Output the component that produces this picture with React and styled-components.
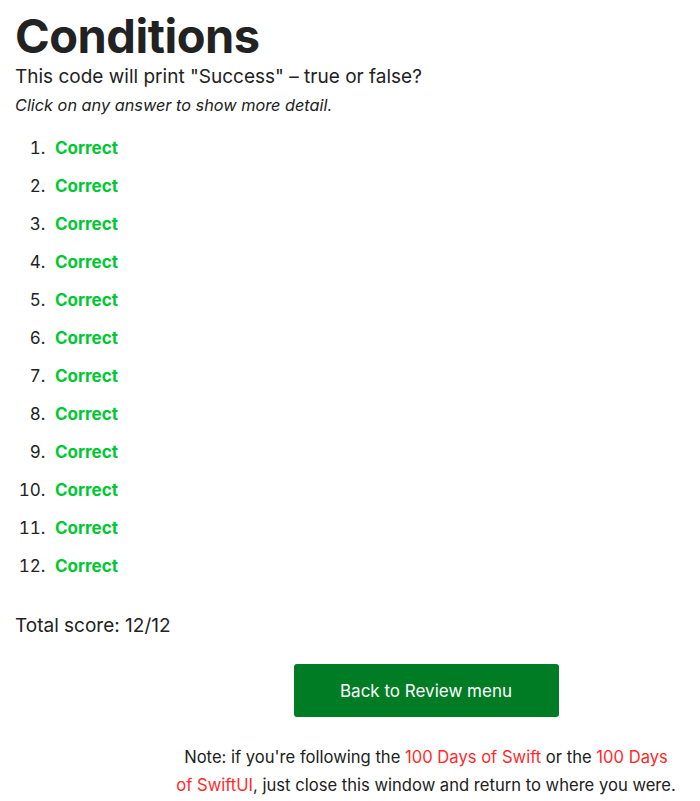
import React from 'react';
import styled, { createGlobalStyle } from 'styled-components';

const GlobalStyle = createGlobalStyle`
  body {
    margin: 0;
    background: #fff;
    color: #222;
    font-family: Inter, "Noto Sans", "Liberation Sans", sans-serif;
  }
`;

const Page = styled.div`
  padding: 8px 15px 12px 15px;
`;

const Title = styled.h1`
  margin: 0;
  font-size: 47px;
  line-height: 56px;
  font-weight: 700;
  letter-spacing: -0.5px;
`;

const Question = styled.p`
  margin: 0;
  font-size: 19px;
  line-height: 26px;
`;

const Hint = styled.p`
  margin: 2px 0 0 0;
  font-size: 16.3px;
  line-height: 26px;
  font-style: italic;
`;

const AnswerList = styled.ol`
  margin: 19px 0 0 0;
  padding-left: 35px;
  font-size: 17px;
`;

const Answer = styled.li`
  line-height: 22px;
  margin-bottom: 16px;
`;

const Verdict = styled.span`
  margin-left: 5px;
  font-weight: 700;
  color: ${props => (props.correct ? '#00c832' : '#e02424')};
  cursor: pointer;
`;

const Score = styled.p`
  margin: 36px 0 0 0;
  font-size: 19px;
  line-height: 26px;
`;

const Footer = styled.div`
  width: 502px;
  margin: 25px 8px 0 auto;
  display: flex;
  flex-direction: column;
  align-items: center;
`;

const BackButton = styled.button`
  width: 265px;
  height: 53px;
  border: none;
  border-radius: 3px;
  background: #007c25;
  color: #fff;
  font-family: inherit;
  font-size: 17px;
  cursor: pointer;
`;

const Note = styled.p`
  margin: 26px 0 0 0;
  font-size: 16.6px;
  line-height: 28px;
  text-align: center;
`;

const CourseLink = styled.a`
  color: #ff2a2a;
  text-decoration: none;
`;

const answers = Array.from({ length: 12 }, (_, i) => ({ id: i + 1, correct: true }));

export default function App() {
  return (
    <Page>
      <GlobalStyle />
      <Title>Conditions</Title>
      <Question>This code will print "Success" – true or false?</Question>
      <Hint>Click on any answer to show more detail.</Hint>
      <AnswerList>
        {answers.map(answer => (
          <Answer key={answer.id}>
            <Verdict correct={answer.correct}>{answer.correct ? 'Correct' : 'Wrong'}</Verdict>
          </Answer>
        ))}
      </AnswerList>
      <Score>Total score: 12/12</Score>
      <Footer>
        <BackButton>Back to Review menu</BackButton>
        <Note>
          Note: if you're following the <CourseLink href="#">100 Days of Swift</CourseLink> or the{' '}
          <CourseLink href="#">100 Days of SwiftUI</CourseLink>, just close this window and return to where you were.
        </Note>
      </Footer>
    </Page>
  );
}
